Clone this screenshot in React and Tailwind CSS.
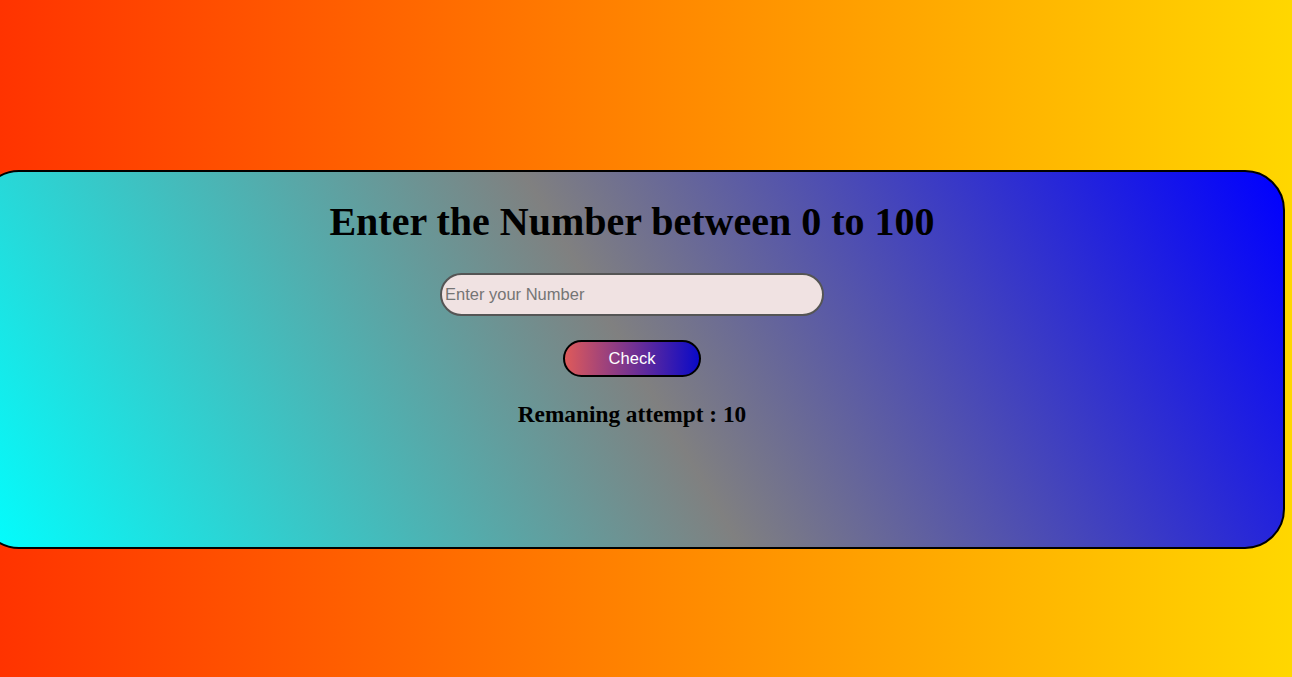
export default function App() {
  return (
    <div className="min-h-screen w-full overflow-hidden bg-[linear-gradient(to_right,#ff3300,#ffd700)] pt-[170px]">
      <div className="-ml-[21px] flex h-[379px] w-[1306px] flex-col items-center rounded-[40px] border-2 border-black bg-[linear-gradient(60deg,#00ffff,#808080,#0000ff)]">
        <h1 className="mt-[27px] text-[40px] font-bold leading-[46px] text-black [font-family:'Liberation_Serif',serif]">
          Enter the Number between 0 to 100
        </h1>
        <input
          type="text"
          placeholder="Enter your Number"
          className="mt-[28px] h-[43px] w-[384px] rounded-full border-2 border-[#555] bg-[#f0e2e2] px-[3px] text-[16.5px] text-black outline-none placeholder:text-[#757575] [font-family:'Liberation_Sans',Arial,sans-serif]"
        />
        <button className="mt-[24px] h-[37px] w-[138px] rounded-full border-2 border-black bg-[linear-gradient(to_right,#de5a5a,#0a0ac8)] text-[16.5px] text-white [font-family:'Liberation_Sans',Arial,sans-serif]">
          Check
        </button>
        <h3 className="mt-[24px] text-[23.3px] font-bold leading-[26px] text-black [font-family:'Liberation_Serif',serif]">
          Remaning attempt : 10
        </h3>
      </div>
    </div>
  );
}
